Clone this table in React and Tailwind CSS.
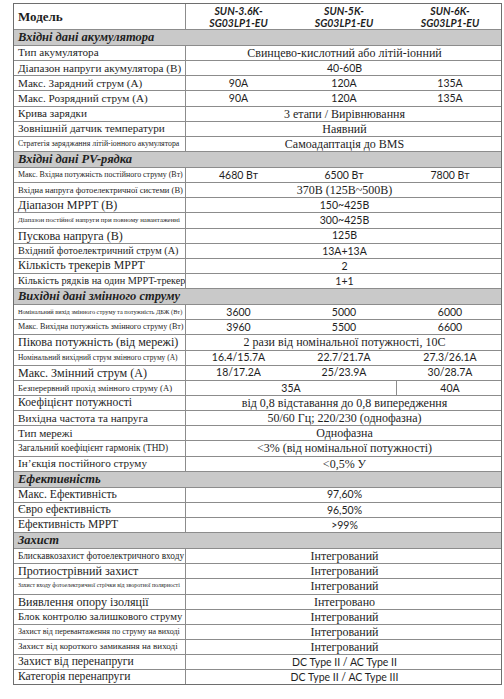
import React from 'react';

const serif = "font-['Liberation_Serif','DejaVu_Serif',serif]";
const sans = "font-['Lato','Open_Sans',sans-serif]";

// label sizes were read off the reference, liberation serif runs a bit wider
const K = 0.93;

const rows = [
  { section: 'Вхідні дані акумулятора' },
  { label: 'Тип акумулятора', size: 12, span: 'Свинцево-кислотний або літій-іонний', serif: true },
  { label: 'Діапазон напруги акумулятора (В)', size: 12, span: '40-60В' },
  { label: 'Макс. Зарядний струм (А)', size: 12, vals: ['90A', '120A', '135A'] },
  { label: 'Макс. Розрядний струм (А)', size: 12, vals: ['90A', '120A', '135A'] },
  { label: 'Крива зарядки', size: 12, span: '3 етапи / Вирівнювання', serif: true },
  { label: 'Зовнішній датчик температури', size: 12, span: 'Наявний', serif: true },
  { label: 'Стратегія заряджання літій-іонного акумулятора', size: 8.4, span: 'Самоадаптація до BMS', serif: true },
  { section: 'Вхідні дані PV-рядка' },
  { label: 'Макс. Вхідна потужність постійного струму (Вт)', size: 8.5, vals: ['4680 Вт', '6500 Вт', '7800 Вт'] },
  { label: 'Вхідна напруга фотоелектричної системи (В)', size: 9.2, span: '370В (125В~500В)', serif: true },
  { label: 'Діапазон MPPT (В)', size: 13, span: '150~425В' },
  { label: 'Діапазон постійної напруги при повному навантаженні', size: 7.4, span: '300~425В' },
  { label: 'Пускова напруга (В)', size: 13, span: '125В' },
  { label: 'Вхідний фотоелектричний струм (А)', size: 11, span: '13A+13A' },
  { label: 'Кількість трекерів MPPT', size: 12.8, span: '2' },
  { label: 'Кількість рядків на один MPPT-трекер', size: 11, span: '1+1' },
  { section: 'Вихідні дані змінного струму' },
  { label: 'Номінальний вихід змінного струму та потужність ДБЖ (Вт)', size: 6.8, vals: ['3600', '5000', '6000'] },
  { label: 'Макс. Вихідна потужність змінного струму (Вт)', size: 8.7, vals: ['3960', '5500', '6600'] },
  { label: 'Пікова потужність (від мережі)', size: 13, span: '2 рази від номінальної потужності, 10С', serif: true },
  { label: 'Номінальний вихідний струм змінного струму (А)', size: 8, vals: ['16.4/15.7A', '22.7/21.7A', '27.3/26.1A'] },
  { label: 'Макс. Змінний струм (А)', size: 13, vals: ['18/17.2A', '25/23.9A', '30/28.7A'] },
  { label: 'Безперервний прохід змінного струму (А)', size: 9.3, split: ['35A', '40A'] },
  { label: 'Коефіцієнт потужності', size: 12.5, span: 'від 0,8 відставання до 0,8 випередження', serif: true },
  { label: 'Вихідна частота та напруга', size: 12, span: '50/60 Гц; 220/230 (однофазна)', serif: true },
  { label: 'Тип мережі', size: 12, span: 'Однофазна', serif: true },
  { label: 'Загальний коефіцієнт гармонік (THD)', size: 10, span: '<3% (від номінальної потужності)', serif: true },
  { label: 'Ін’єкція постійного струму', size: 12, span: '<0,5% У', serif: true },
  { section: 'Ефективність' },
  { label: 'Макс. Ефективність', size: 12.5, span: '97,60%' },
  { label: 'Євро ефективність', size: 12.5, span: '96,50%' },
  { label: 'Ефективність MPPT', size: 12.5, span: '>99%' },
  { section: 'Захист' },
  { label: 'Блискавкозахист фотоелектричного входу', size: 10, span: 'Інтегрований', serif: true },
  { label: 'Протиострівний захист', size: 13, span: 'Інтегрований', serif: true },
  { label: 'Захист входу фотоелектричної стрічки від зворотної полярності', size: 6.4, span: 'Інтегрований', serif: true },
  { label: 'Виявлення опору ізоляції', size: 13, span: 'Інтегровано', serif: true },
  { label: 'Блок контролю залишкового струму', size: 11.5, span: 'Інтегрований', serif: true },
  { label: 'Захист від перевантаження по струму на виході', size: 8.6, span: 'Інтегрований', serif: true },
  { label: 'Захист від короткого замикання на виході', size: 9.7, span: 'Інтегрований', serif: true },
  { label: 'Захист від перенапруги', size: 12.5, span: 'DC Type II / AC Type II' },
  { label: 'Категорія перенапруги', size: 12.5, span: 'DC Type II / AC Type III' },
];

function ValueText({ children, isSerif }) {
  return (
    <span className={isSerif ? `${serif} text-[12px]` : `${sans} text-[10.5px]`}>{children}</span>
  );
}

function Row({ row }) {
  if (row.section) {
    return (
      <div className="h-[16px] border-t border-[#8c8c8c] bg-[#c9c9c9] flex items-center pl-[4px]">
        <span className={`${serif} text-[12.5px] font-bold italic leading-none`}>{row.section}</span>
      </div>
    );
  }
  return (
    <div className="h-[15.15px] border-t border-[#8c8c8c] grid grid-cols-[172px_105px_106px_106px] items-stretch leading-none">
      <div className="flex items-center pl-[4px] border-r border-[#8c8c8c] overflow-hidden whitespace-nowrap">
        <span className={serif} style={{ fontSize: row.size * K }}>{row.label}</span>
      </div>
      {row.vals &&
        row.vals.map((v) => (
          <div key={v} className="flex items-center justify-center whitespace-nowrap">
            <ValueText>{v}</ValueText>
          </div>
        ))}
      {row.span && (
        <div className="col-span-3 flex items-center justify-center whitespace-nowrap">
          <ValueText isSerif={row.serif}>{row.span}</ValueText>
        </div>
      )}
      {row.split && (
        <>
          <div className="col-span-2 flex items-center justify-center border-r border-[#8c8c8c]">
            <ValueText>{row.split[0]}</ValueText>
          </div>
          <div className="flex items-center justify-center">
            <ValueText>{row.split[1]}</ValueText>
          </div>
        </>
      )}
    </div>
  );
}

export default function App() {
  return (
    <div className="bg-white w-[504px] h-[699px] pl-[13px] pt-[3px] text-[#1e1e1e]">
      <div className="w-[489px] border border-[#6e6e6e]">
        <div className="h-[25px] grid grid-cols-[172px_105px_106px_106px]">
          <div className="flex items-center pl-[4px] border-r border-[#8c8c8c]">
            <span className={`${serif} text-[13px] font-bold`}>Модель</span>
          </div>
          {[
            ['SUN-3.6K-', 'SG03LP1-EU'],
            ['SUN-5K-', 'SG03LP1-EU'],
            ['SUN-6K-', 'SG03LP1-EU'],
          ].map(([a, b]) => (
            <div key={a} className={`${sans} flex flex-col items-center justify-center text-[10.5px] font-bold italic leading-[12px]`}>
              <span>{a}</span>
              <span>{b}</span>
            </div>
          ))}
        </div>
        {rows.map((r, i) => (
          <Row key={i} row={r} />
        ))}
      </div>
    </div>
  );
}
